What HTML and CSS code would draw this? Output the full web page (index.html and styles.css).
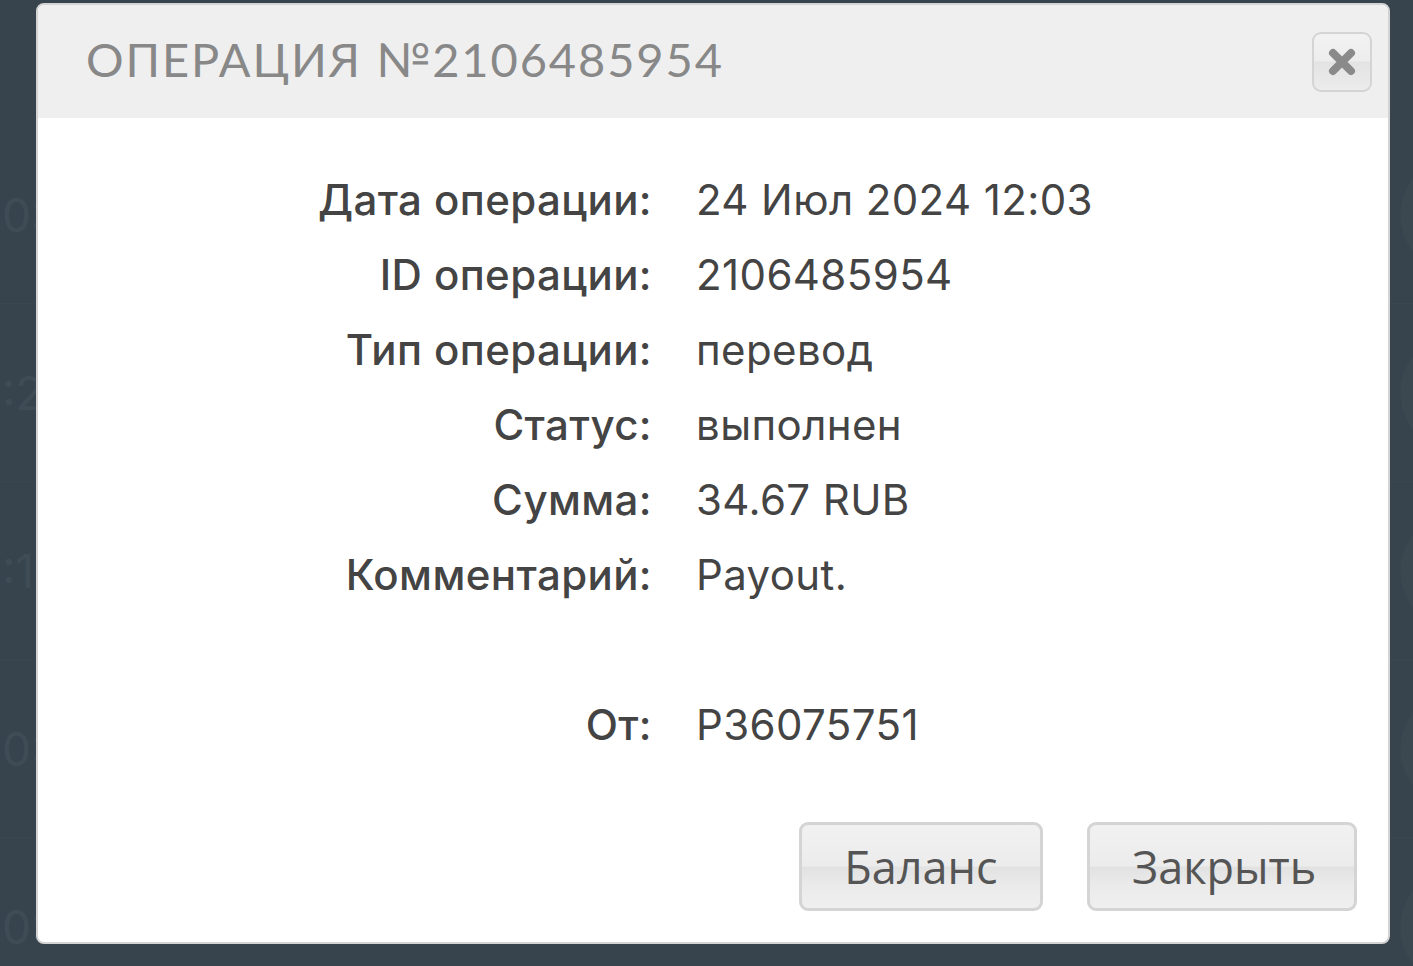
FILE: index.html
```html
<!DOCTYPE html>
<html lang="ru">
<head>
<meta charset="utf-8">
<title>Операция</title>
<link rel="stylesheet" href="styles.css">
</head>
<body>
<div class="page">
  <div class="bg-list">
    <div class="bg-row"><span class="bg-time">03</span><span class="bg-icon"></span></div>
    <div class="bg-row"><span class="bg-time">:21</span><span class="bg-icon"></span></div>
    <div class="bg-row"><span class="bg-time">:19</span><span class="bg-icon"></span></div>
    <div class="bg-row"><span class="bg-time">0:0</span><span class="bg-icon"></span></div>
    <div class="bg-row"><span class="bg-time">0:0</span><span class="bg-icon"></span></div>
  </div>

  <div class="modal">
    <div class="modal-header">
      <h1 class="modal-title">ОПЕРАЦИЯ №2106485954</h1>
      <button class="close-btn" aria-label="Закрыть">
        <svg width="30" height="30" viewBox="0 0 30 30"><path d="M6 6 L24 24 M24 6 L6 24" stroke="#8a8a8a" stroke-width="8" stroke-linecap="round"/></svg>
      </button>
    </div>
    <div class="modal-body">
      <dl class="details">
        <dt>Дата операции:</dt><dd>24 Июл 2024 12:03</dd>
        <dt>ID операции:</dt><dd>2106485954</dd>
        <dt>Тип операции:</dt><dd>перевод</dd>
        <dt>Статус:</dt><dd>выполнен</dd>
        <dt>Сумма:</dt><dd>34.67 RUB</dd>
        <dt>Комментарий:</dt><dd>Payout.</dd>
        <dt class="spacer"></dt><dd class="spacer"></dd>
        <dt>От:</dt><dd>P36075751</dd>
      </dl>
      <div class="actions">
        <button class="btn">Баланс</button>
        <button class="btn">Закрыть</button>
      </div>
    </div>
  </div>
</div>
</body>
</html>
```

FILE: styles.css
```css
* { box-sizing: border-box; }
html, body { margin: 0; padding: 0; }
body {
  background: #37444d;
  width: 1413px;
  height: 966px;
  overflow: hidden;
  font-family: "Inter", "Noto Sans", sans-serif;
}
.page { position: relative; width: 1413px; height: 966px; overflow: hidden; }

.bg-list {
  padding-top: 126px;
  height: 966px;
  overflow: hidden;
  display: flex;
  flex-direction: column;
}
.bg-row {
  flex: 0 0 178px;
  display: flex;
  align-items: center;
  justify-content: space-between;
  border-bottom: 1px solid #3a4750;
}
.bg-time {
  font-size: 46px;
  color: #3f4c55;
  margin-left: 2px;
}
.bg-icon {
  width: 24px;
  height: 120px;
  background: radial-gradient(circle at 70px 60px, #2b3e4c 0 36px, #3c4850 36px 58px, transparent 59px);
}

.modal {
  position: absolute;
  left: 36px;
  top: 3px;
  width: 1354px;
  height: 941px;
  background: #ffffff;
  border: 2px solid #d3d3d3;
  border-radius: 8px;
  overflow: hidden;
  display: flex;
  flex-direction: column;
}
.modal-header {
  height: 113px;
  background: #efefef;
  display: flex;
  align-items: center;
  justify-content: space-between;
  padding: 0 16px 0 48px;
}
.modal-title {
  margin: 0;
  font-family: "Lato", "Inter", sans-serif;
  font-weight: 400;
  font-size: 47px;
  letter-spacing: 1.9px;
  color: #888888;
  padding-bottom: 6px;
}
.close-btn {
  width: 60px;
  height: 60px;
  border: 2px solid #d4d4d4;
  border-radius: 9px;
  background: linear-gradient(#f2f2f2 0%, #ededed 48%, #e3e3e3 50%, #ececec 100%);
  display: flex;
  align-items: center;
  justify-content: center;
  padding: 0;
  margin-top: 0;
}

.modal-body {
  flex: 1;
  display: flex;
  flex-direction: column;
  padding: 44px 31px 0 0;
}
.details {
  margin: 0;
  display: grid;
  grid-template-columns: 614px 1fr;
  column-gap: 44px;
  color: #444444;
  font-size: 42px;
  line-height: 75px;
}
.details dt {
  text-align: right;
  font-weight: 500;
  letter-spacing: 0.4px;
}
.details dd {
  margin: 0;
  font-weight: 400;
  letter-spacing: 0.4px;
}
.details .spacer { height: 75px; }

.actions {
  display: flex;
  justify-content: flex-end;
  gap: 44px;
  margin-top: 60px;
}
.btn {
  height: 89px;
  border: 3px solid #d4d4d4;
  border-radius: 9px;
  background: linear-gradient(#f1f1f1 0%, #ececec 49%, #e2e2e2 51%, #eaeaea 70%, #efefef 100%);
  font-family: "Open Sans", "Noto Sans", sans-serif;
  font-size: 45px;
  color: #555555;
  padding: 0 42px;
}
.btn:first-child { width: 244px; }
.btn:last-child { width: 270px; }
```
